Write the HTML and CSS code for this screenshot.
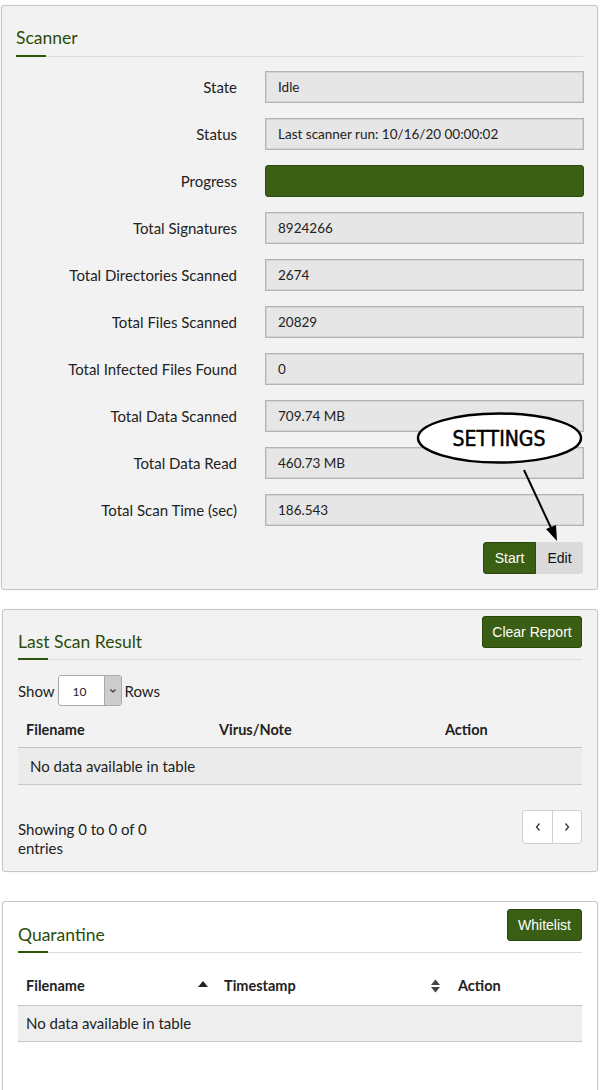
FILE: index.html
```html
<!DOCTYPE html>
<html>
<head>
<meta charset="utf-8">
<link rel="stylesheet" href="styles.css">
</head>
<body>
<div class="page">
  <section class="panel scanner">
    <div class="panel-head"><h2 class="title">Scanner</h2></div>
    <div class="form">
      <div class="label">State</div><div class="field">Idle</div>
      <div class="label">Status</div><div class="field">Last scanner run: 10/16/20 00:00:02</div>
      <div class="label">Progress</div><div class="bar"></div>
      <div class="label">Total Signatures</div><div class="field">8924266</div>
      <div class="label">Total Directories Scanned</div><div class="field">2674</div>
      <div class="label">Total Files Scanned</div><div class="field">20829</div>
      <div class="label">Total Infected Files Found</div><div class="field">0</div>
      <div class="label">Total Data Scanned</div><div class="field">709.74 MB</div>
      <div class="label">Total Data Read</div><div class="field">460.73 MB</div>
      <div class="label">Total Scan Time (sec)</div><div class="field">186.543</div>
    </div>
    <div class="actions">
      <div class="btn-group">
        <button class="btn btn-green">Start</button><button class="btn btn-grey">Edit</button>
      </div>
    </div>
  </section>

  <section class="panel results">
    <div class="panel-head split">
      <h2 class="title">Last Scan Result</h2>
      <button class="btn btn-green btn-solo">Clear Report</button>
    </div>
    <div class="show-row">
      <span>Show</span>
      <span class="select"><span class="select-val">10</span><span class="select-caret"><svg width="8" height="6" viewBox="0 0 8 6"><path d="M1.5 1.5 L4 4 L6.5 1.5" fill="none" stroke="#333" stroke-width="1.1"/></svg></span></span>
      <span>Rows</span>
    </div>
    <table class="table t-results">
      <thead><tr><th class="c1">Filename</th><th class="c2">Virus/Note</th><th class="c3">Action</th></tr></thead>
      <tbody><tr><td colspan="3" class="empty">No data available in table</td></tr></tbody>
    </table>
    <div class="foot">
      <div class="info">Showing 0 to 0 of 0 entries</div>
      <div class="pager">
        <span class="pg"><svg width="8" height="10" viewBox="0 0 8 10"><path d="M5.5 1.5 L2.5 5 L5.5 8.5" fill="none" stroke="#333" stroke-width="1.3"/></svg></span>
        <span class="pg"><svg width="8" height="10" viewBox="0 0 8 10"><path d="M2.5 1.5 L5.5 5 L2.5 8.5" fill="none" stroke="#333" stroke-width="1.3"/></svg></span>
      </div>
    </div>
  </section>

  <section class="panel quarantine">
    <div class="panel-head split">
      <h2 class="title">Quarantine</h2>
      <button class="btn btn-green btn-solo">Whitelist</button>
    </div>
    <table class="table t-quar">
      <thead><tr>
        <th class="q1"><span>Filename</span><svg class="sort up" width="10" height="6" viewBox="0 0 10 6"><path d="M0 6 L5 0 L10 6 Z" fill="#222"/></svg></th>
        <th class="q2"><span>Timestamp</span><svg class="sort both" width="9" height="14" viewBox="0 0 9 14"><path d="M0 6 L4.5 0.5 L9 6 Z" fill="#444"/><path d="M0 8 L4.5 13.5 L9 8 Z" fill="#444"/></svg></th>
        <th class="q3">Action</th>
      </tr></thead>
      <tbody><tr><td colspan="3" class="empty2">No data available in table</td></tr></tbody>
    </table>
  </section>

  <svg class="callout" width="600" height="600" viewBox="0 0 600 600">
    <ellipse cx="499.5" cy="438" rx="81.5" ry="24.5" fill="#fff" stroke="#000" stroke-width="2.5"/>
    <text x="499" y="446" text-anchor="middle" class="callout-text">SETTINGS</text>
    <line x1="524" y1="470" x2="552" y2="530" stroke="#000" stroke-width="2"/>
    <polygon points="557,541 546,529 556,525" fill="#000"/>
  </svg>
</div>
</body>
</html>
```
FILE: styles.css
```css
* { box-sizing: border-box; }
html, body { margin: 0; padding: 0; background: #fff; }
body {
  font-family: "Lato", "Open Sans", sans-serif;
  font-size: 15px;
  color: #222;
}
.page { position: relative; width: 600px; height: 1090px; overflow: hidden; padding-top: 5px; }

.panel {
  border: 1px solid #c6c6c6;
  border-radius: 3px;
  background: #f2f2f2;
  box-shadow: 0 0 2px rgba(0,0,0,0.08);
}
.scanner { margin-left: 1px; width: 597px; height: 585px; padding: 20px 14px 0 14px; }
.results { margin: 19px 0 0 2px; width: 596px; height: 263px; padding: 6px 15px 0 15px; }
.quarantine { margin: 29px 0 0 2px; width: 596px; height: 400px; padding: 7px 15px 0 15px; background: #fff; }

.panel-head {
  border-bottom: 1px solid #dcdcdc;
  padding-bottom: 6px;
  position: relative;
}
.panel-head::after {
  content: "";
  position: absolute;
  left: 0; bottom: -1px;
  width: 30px; height: 2px;
  background: #2f5309;
}
.panel-head.split { display: flex; justify-content: space-between; align-items: flex-end; padding-bottom: 5px; }
.panel-head.split .btn { margin-bottom: 6px; }
.title {
  margin: 0;
  font-weight: 400;
  font-size: 17.5px;
  line-height: 24px;
  color: #2b4c07;
}

.form {
  display: grid;
  grid-template-columns: 221px 319px;
  column-gap: 28px;
  row-gap: 15px;
  margin-top: 14px;
  align-items: center;
}
.label { text-align: right; color: #222; }
.field {
  height: 32px;
  line-height: 30px;
  background: #e6e6e6;
  border: 1px solid #b3b3b3;
  box-shadow: inset 0 0 0 1px #d4d4d4;
  padding-left: 12px;
  color: #222;
  font-size: 13.5px;
}
.bar {
  height: 32px;
  background: #3b5f15;
  border: 1px solid #2d490d;
  border-radius: 3px;
}

.actions { display: flex; justify-content: flex-end; margin-top: 16px; }
.btn-group { display: flex; }
.btn {
  font-family: "Liberation Sans", Arial, sans-serif;
  font-size: 14px;
  height: 32px;
  border: none;
  padding: 0;
  cursor: pointer;
  white-space: nowrap;
}
.btn-green { background: #3a5e14; color: #fff; border: 1px solid #2b470c; }
.btn-group .btn-green { width: 53px; border-radius: 3px 0 0 3px; }
.btn-grey { width: 47px; background: #dadada; color: #111; border-radius: 0 3px 3px 0; }
.btn-solo { border-radius: 3px; padding: 0; }
.results .btn-solo { width: 100px; }
.quarantine .btn-solo { width: 75px; }

.show-row { display: flex; align-items: center; gap: 3px; margin-top: 15px; height: 31px; }
.select {
  display: flex;
  width: 64px; height: 31px;
  border: 1px solid #aaa;
  border-radius: 3px;
  background: #fff;
  overflow: hidden;
}
.select-val { flex: 1; font-size: 12px; padding-left: 14px; line-height: 31px; }
.select-caret {
  width: 17px;
  background: #cdcdcd;
  border-left: 1px solid #aaa;
  display: flex;
  align-items: center;
  justify-content: center;
}

.table { width: 100%; border-collapse: collapse; margin-top: 6px; }
.table th {
  text-align: left;
  font-weight: 700;
  font-size: 14.5px;
  height: 35px;
  padding: 0 8px;
  color: #222;
  border-bottom: 1px solid #c4c4c4;
}
.t-results .c1 { width: 193px; }
.t-results .c2 { width: 226px; }
.empty {
  background: #ebebeb;
  height: 37px;
  padding: 0 12px;
  border-bottom: 1px solid #c8c8c8;
}

.foot { display: flex; justify-content: space-between; align-items: flex-start; margin-top: 35px; }
.info { width: 150px; line-height: 19px; }
.pager {
  display: flex;
  margin-top: -10px;
  border: 1px solid #cfcfcf;
  border-radius: 3px;
  background: #fff;
}
.pg {
  width: 29px; height: 32px;
  display: flex;
  align-items: center;
  justify-content: center;
}
.pg + .pg { border-left: 1px solid #cfcfcf; }

.t-quar { margin-top: 14px; }
.t-quar th { height: 38px; position: relative; }
.t-quar .q1 { width: 198px; }
.t-quar .q2 { width: 234px; }
.sort { position: absolute; top: 50%; }
.sort.up { right: 8px; margin-top: -5px; }
.sort.both { right: 10px; margin-top: -7px; }
.empty2 {
  background: #eeeeee;
  height: 36px;
  padding: 0 8px;
  border-bottom: 1px solid #c8c8c8;
}

.callout { position: absolute; left: 0; top: 0; pointer-events: none; }
.callout-text {
  font-family: "DejaVu Sans Condensed", "DejaVu Sans", sans-serif;
  font-size: 21px;
  fill: #000;
  stroke: #000;
  stroke-width: 0.5px;
}
```
